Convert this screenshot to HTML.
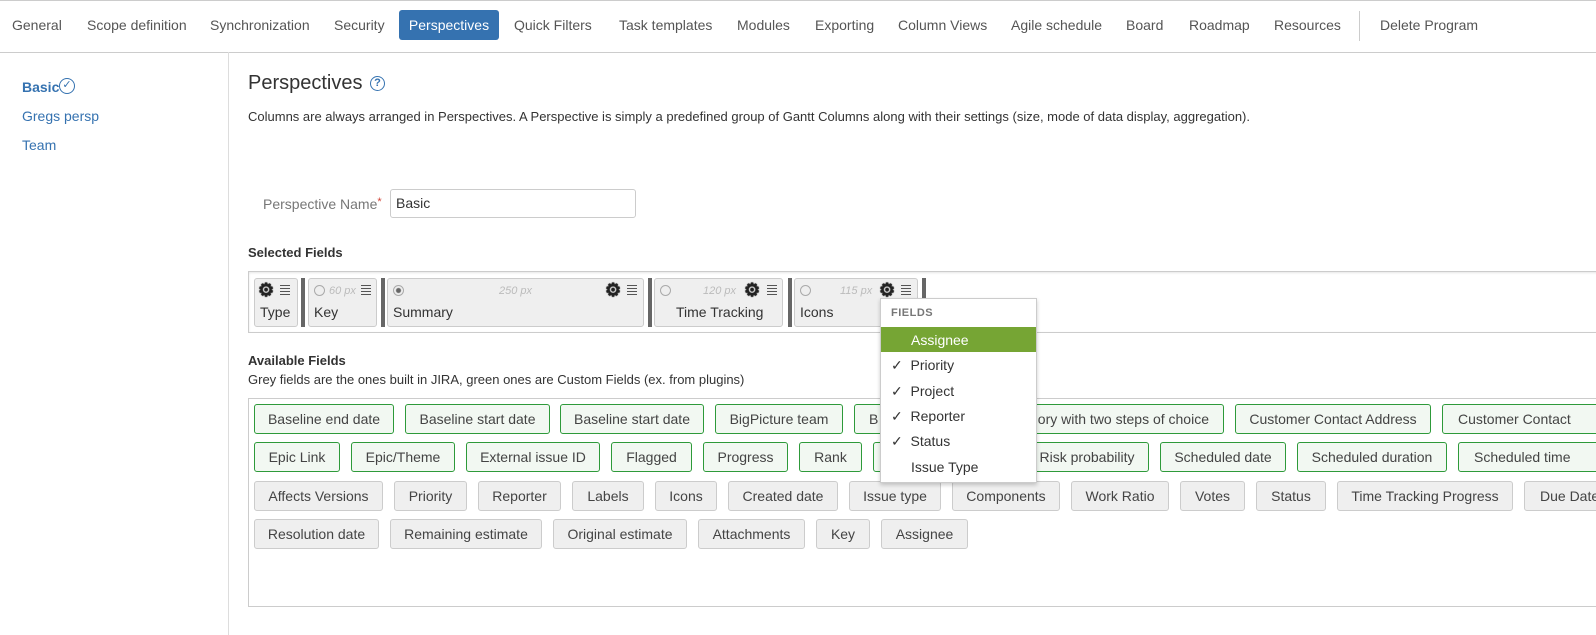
<!DOCTYPE html>
<html><head><meta charset="utf-8"><style>
*{box-sizing:border-box;margin:0;padding:0}
body{width:1596px;height:635px;overflow:hidden;background:#fff;font-family:"Liberation Sans",Arial,sans-serif;font-size:14px;color:#333;position:relative}
.a{position:absolute;white-space:nowrap}
.nav{color:#555;top:17px}
.chip{position:absolute;height:30px;line-height:28px;text-align:center;border-radius:3px;color:#444;font-size:14px;white-space:nowrap;overflow:hidden}
.g{background:#f2f8f2;border:1px solid #2e9a3a}
.n{background:#efefef;border:1px solid #ccc}
.sel{position:absolute;top:278px;height:49px;background:#efefef;border:1px solid #ccc;border-radius:3px}
.bar{position:absolute;top:278px;width:4px;height:49px;background:#666}
.sel .lbl{position:absolute;left:5px;top:25px;font-size:14px;color:#333}
.sel .px{position:absolute;top:6px;font-size:11px;font-style:italic;color:#bbb}
.sel .rad{position:absolute;left:5px;top:6px;width:11px;height:11px;border:1px solid #aaa;border-radius:50%;background:#eee}
.gear{position:absolute;top:1px;font-size:18px;color:#222;font-weight:bold;text-shadow:0 0 1px #222,0 0 1px #222}
.lines{position:absolute;top:6px;width:10px;height:10px;background:repeating-linear-gradient(#555 0 1px,transparent 1px 3px)}
.dd{position:absolute;left:880px;top:298px;width:157px;height:185px;background:#fff;border:1px solid #ccc;box-shadow:0 2px 4px rgba(0,0,0,.2)}
.dd div{position:absolute;left:0;width:155px;height:25px;line-height:25px;font-size:14px;color:#333}
</style></head><body>
<div class="a" style="left:0;top:0;width:1596px;height:1px;background:#ccc"></div>
<div class="a" style="left:0;top:52px;width:1596px;height:1px;background:#ccc"></div>
<div class="a" style="left:228px;top:52px;width:1px;height:583px;background:#ddd"></div>
<span class="a nav" style="left:12px">General</span>
<span class="a nav" style="left:87px">Scope definition</span>
<span class="a nav" style="left:210px">Synchronization</span>
<span class="a nav" style="left:334px">Security</span>
<div class="a" style="left:399px;top:10px;width:100px;height:30px;background:#3572b0;border-radius:3px;color:#fff;line-height:30px;text-align:center">Perspectives</div>
<span class="a nav" style="left:514px">Quick Filters</span>
<span class="a nav" style="left:619px">Task templates</span>
<span class="a nav" style="left:737px">Modules</span>
<span class="a nav" style="left:815px">Exporting</span>
<span class="a nav" style="left:898px">Column Views</span>
<span class="a nav" style="left:1011px">Agile schedule</span>
<span class="a nav" style="left:1126px">Board</span>
<span class="a nav" style="left:1189px">Roadmap</span>
<span class="a nav" style="left:1274px">Resources</span>
<div class="a" style="left:1359px;top:11px;width:1px;height:30px;background:#ccc"></div>
<span class="a nav" style="left:1380px">Delete Program</span>

<span class="a" style="left:22px;top:79px;color:#3572b0;font-weight:bold">Basic</span>
<span class="a" style="left:59px;top:78px;width:16px;height:16px;border:1.5px solid #3572b0;border-radius:50%;color:#3572b0;font-size:11px;line-height:13px;text-align:center">✓</span>
<span class="a" style="left:22px;top:108px;color:#3572b0">Gregs persp</span>
<span class="a" style="left:22px;top:137px;color:#3572b0">Team</span>

<span class="a" style="left:248px;top:72px;font-size:20px;color:#333">Perspectives</span>
<span class="a" style="left:370px;top:76px;width:15px;height:15px;border:1.5px solid #3572b0;border-radius:50%;color:#3572b0;font-size:11px;font-weight:bold;line-height:12px;text-align:center">?</span>
<span class="a" style="left:248px;top:109px;font-size:13px">Columns are always arranged in Perspectives. A Perspective is simply a predefined group of Gantt Columns along with their settings (size, mode of data display, aggregation).</span>

<span class="a" style="left:263px;top:196px;color:#777">Perspective Name<span style="color:#d04437;font-size:11px;vertical-align:top">*</span></span>
<div class="a" style="left:390px;top:189px;width:246px;height:29px;border:1px solid #ccc;border-radius:3px;padding:5px;line-height:17px;color:#333">Basic</div>

<span class="a" style="left:248px;top:245px;font-size:13px;font-weight:bold">Selected Fields</span>
<div class="a" style="left:248px;top:271px;width:1360px;height:62px;border:1px solid #ccc;box-shadow:0 1px 2px rgba(0,0,0,.1) inset"></div>

<div class="sel" style="left:254px;width:44px"><span class="gear" style="left:3px">⚙</span><span class="lines" style="left:25px"></span><span class="lbl">Type</span></div>
<div class="bar" style="left:301px"></div>
<div class="sel" style="left:308px;width:69px"><span class="rad"></span><span class="px" style="left:20px">60 px</span><span class="lines" style="left:52px"></span><span class="lbl">Key</span></div>
<div class="bar" style="left:381px"></div>
<div class="sel" style="left:387px;width:257px"><span class="rad" style="background:radial-gradient(#666 0 2px,#eee 3px)"></span><span class="px" style="left:111px">250 px</span><span class="gear" style="left:217px">⚙</span><span class="lines" style="left:239px"></span><span class="lbl">Summary</span></div>
<div class="bar" style="left:648px"></div>
<div class="sel" style="left:654px;width:129px"><span class="rad"></span><span class="px" style="left:48px">120 px</span><span class="gear" style="left:89px">⚙</span><span class="lines" style="left:112px"></span><span class="lbl" style="left:21px">Time Tracking</span></div>
<div class="bar" style="left:788px"></div>
<div class="sel" style="left:794px;width:124px"><span class="rad"></span><span class="px" style="left:45px">115 px</span><span class="gear" style="left:84px">⚙</span><span class="lines" style="left:106px"></span><span class="lbl">Icons</span></div>
<div class="bar" style="left:922px"></div>

<span class="a" style="left:248px;top:353px;font-size:13px;font-weight:bold">Available Fields</span>
<span class="a" style="left:248px;top:372px;font-size:13px">Grey fields are the ones built in JIRA, green ones are Custom Fields (ex. from plugins)</span>
<div class="a" style="left:248px;top:398px;width:1360px;height:209px;border:1px solid #ccc"></div>

<div class="chip g" style="left:254px;top:404px;width:140px">Baseline end date</div>
<div class="chip g" style="left:405px;top:404px;width:145px">Baseline start date</div>
<div class="chip g" style="left:560px;top:404px;width:144px">Baseline start date</div>
<div class="chip g" style="left:715px;top:404px;width:128px">BigPicture team</div>
<div class="chip g" style="left:854px;top:404px;width:370px"><span style="position:absolute;left:14px">B</span><span style="position:absolute;right:14px">Business category with two steps of choice</span></div>
<div class="chip g" style="left:1235px;top:404px;width:196px">Customer Contact Address</div>
<div class="chip g" style="left:1442px;top:404px;width:170px;text-align:left;padding-left:15px">Customer Contact</div>

<div class="chip g" style="left:254px;top:442px;width:86px">Epic Link</div>
<div class="chip g" style="left:351px;top:442px;width:104px">Epic/Theme</div>
<div class="chip g" style="left:466px;top:442px;width:134px">External issue ID</div>
<div class="chip g" style="left:611px;top:442px;width:81px">Flagged</div>
<div class="chip g" style="left:703px;top:442px;width:85px">Progress</div>
<div class="chip g" style="left:799px;top:442px;width:63px">Rank</div>
<div class="chip g" style="left:873px;top:442px;width:140px">Resolution</div>
<div class="chip g" style="left:1025px;top:442px;width:124px">Risk probability</div>
<div class="chip g" style="left:1160px;top:442px;width:126px">Scheduled date</div>
<div class="chip g" style="left:1297px;top:442px;width:150px">Scheduled duration</div>
<div class="chip g" style="left:1458px;top:442px;width:150px;text-align:left;padding-left:15px">Scheduled time</div>

<div class="chip n" style="left:254px;top:481px;width:129px">Affects Versions</div>
<div class="chip n" style="left:394px;top:481px;width:73px">Priority</div>
<div class="chip n" style="left:478px;top:481px;width:83px">Reporter</div>
<div class="chip n" style="left:572px;top:481px;width:72px">Labels</div>
<div class="chip n" style="left:655px;top:481px;width:62px">Icons</div>
<div class="chip n" style="left:728px;top:481px;width:110px">Created date</div>
<div class="chip n" style="left:849px;top:481px;width:92px">Issue type</div>
<div class="chip n" style="left:952px;top:481px;width:108px">Components</div>
<div class="chip n" style="left:1071px;top:481px;width:98px">Work Ratio</div>
<div class="chip n" style="left:1180px;top:481px;width:65px">Votes</div>
<div class="chip n" style="left:1256px;top:481px;width:70px">Status</div>
<div class="chip n" style="left:1337px;top:481px;width:176px">Time Tracking Progress</div>
<div class="chip n" style="left:1524px;top:481px;width:100px;text-align:left;padding-left:15px">Due Date</div>

<div class="chip n" style="left:254px;top:519px;width:125px">Resolution date</div>
<div class="chip n" style="left:390px;top:519px;width:152px">Remaining estimate</div>
<div class="chip n" style="left:553px;top:519px;width:134px">Original estimate</div>
<div class="chip n" style="left:698px;top:519px;width:107px">Attachments</div>
<div class="chip n" style="left:816px;top:519px;width:54px">Key</div>
<div class="chip n" style="left:881px;top:519px;width:87px">Assignee</div>

<div class="dd">
<div style="top:2px;left:10px;font-size:11px;font-weight:bold;color:#777;letter-spacing:.5px">FIELDS</div>
<div style="top:28px;background:#76a534;color:#fff;padding-left:30px;line-height:26px">Assignee</div>
<div style="top:54px;padding-left:10px">✓&nbsp; Priority</div>
<div style="top:80px;padding-left:10px">✓&nbsp; Project</div>
<div style="top:105px;padding-left:10px">✓&nbsp; Reporter</div>
<div style="top:130px;padding-left:10px">✓&nbsp; Status</div>
<div style="top:156px;padding-left:30px">Issue Type</div>
</div>
</body></html>
